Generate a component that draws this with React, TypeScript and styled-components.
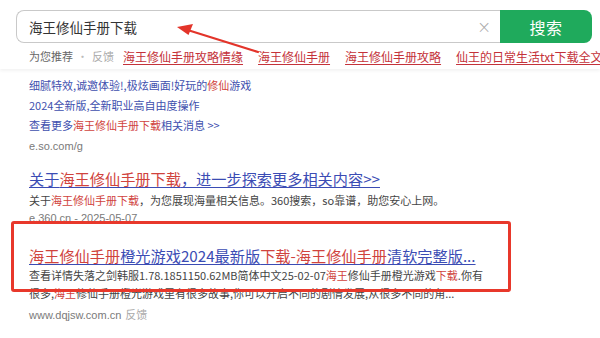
import React from 'react';
import styled, { createGlobalStyle } from 'styled-components';

const GlobalStyle = createGlobalStyle`
  html, body {
    margin: 0;
    padding: 0;
    background: #fff;
    font-family: "Noto Sans CJK SC", "Noto Sans", sans-serif;
    overflow: hidden;
  }
`;

const Page = styled.div`
  position: relative;
  width: 600px;
  height: 338px;
  overflow: hidden;
  background: #fff;
`;

const Header = styled.header`
  height: 69px;
  padding: 10px 0 0 16px;
  box-sizing: border-box;
  box-shadow: 0 2px 3px rgba(0, 0, 0, 0.05);
`;

const SearchRow = styled.div`
  display: flex;
  height: 33px;
  width: 576px;
`;

const InputBox = styled.div`
  flex: 1;
  display: flex;
  align-items: center;
  border: 1px solid #c9c9c9;
  border-right: none;
  border-radius: 8px 0 0 8px;
  padding: 0 0 0 12px;
  font-size: 13.5px;
  color: #333;
`;

const QueryText = styled.span`
  flex: 1;
`;

const Clear = styled.span`
  width: 28px;
  margin-right: 2px;
  text-align: center;
  color: #aaa;
  font-size: 17px;
  font-family: "DejaVu Sans", sans-serif;
  font-weight: 300;
`;

const SearchButton = styled.button`
  width: 92px;
  border: none;
  border-radius: 0 8px 8px 0;
  background: #1faa5c;
  color: #fff;
  font-family: inherit;
  font-size: 16px;
  letter-spacing: 0.5px;
`;

const SuggestRow = styled.div`
  display: flex;
  align-items: center;
  height: 26px;
  margin-left: 13px;
  white-space: nowrap;
  font-size: 11px;
`;

const Muted = styled.span`
  color: #666;
`;

const Dot = styled.span`
  color: #bbb;
  margin: 0 4px;
`;

const Feedback = styled.span`
  color: #aaa;
  margin-right: 9px;
`;

const Suggest = styled.a`
  color: #c4323a;
  font-size: 12px;
  text-decoration: underline;
  text-underline-offset: 2px;
  margin-right: 15px;
`;

const Results = styled.main`
  padding: 6px 0 0 29px;
`;

const Block = styled.section<{ $top: number }>`
  margin-top: ${(p) => p.$top}px;
`;

const Line = styled.div<{ $h?: number }>`
  font-size: 11px;
  line-height: ${(p) => p.$h ?? 20}px;
  white-space: nowrap;
  color: #444;
`;

const BlueLine = styled(Line)`
  color: #3e4fae;
`;

const Title = styled.a`
  display: block;
  font-size: 15.2px;
  line-height: 24px;
  white-space: nowrap;
  color: #3b4cb4;
  text-decoration: underline;
  text-decoration-thickness: 1px;
  text-underline-offset: 2px;
`;

const Hl = styled.span`
  color: #d0433d;
`;

const Url = styled.div<{ $h?: number; $mt?: number }>`
  font-size: 11px;
  line-height: ${(p) => p.$h ?? 20}px;
  margin-top: ${(p) => p.$mt ?? 0}px;
  color: #7a7a7a;
  font-family: "Liberation Sans", "Noto Sans CJK SC", sans-serif;
`;

const UrlFeedback = styled.span`
  color: #aaa;
  margin-left: 4px;
  font-family: "Noto Sans CJK SC", sans-serif;
`;

const Highlight = styled.div`
  position: absolute;
  left: 11px;
  top: 221px;
  width: 500px;
  height: 71px;
  box-sizing: border-box;
  border: 3px solid #e8382b;
  border-radius: 3px;
  pointer-events: none;
`;

const Arrow = styled.svg`
  position: absolute;
  left: 0;
  top: 0;
  pointer-events: none;
`;

const suggestions = ['海王修仙手册攻略情缘', '海王修仙手册', '海王修仙手册攻略', '仙王的日常生活txt下载全文下载'];

export default function App() {
  return (
    <Page>
      <GlobalStyle />
      <Header>
        <SearchRow>
          <InputBox>
            <QueryText>海王修仙手册下载</QueryText>
            <Clear>×</Clear>
          </InputBox>
          <SearchButton>搜索</SearchButton>
        </SearchRow>
        <SuggestRow>
          <Muted>为您推荐</Muted>
          <Dot>·</Dot>
          <Feedback>反馈</Feedback>
          {suggestions.map((s) => (
            <Suggest key={s}>{s}</Suggest>
          ))}
        </SuggestRow>
      </Header>

      <Results>
        <Block $top={0}>
          <BlueLine>
            细腻特效,诚邀体验!,极炫画面!好玩的<Hl>修仙</Hl>游戏
          </BlueLine>
          <BlueLine>2024全新版,全新职业高自由度操作</BlueLine>
          <BlueLine>
            查看更多<Hl>海王修仙手册下载</Hl>相关消息 &gt;&gt;
          </BlueLine>
          <Url $h={22}>e.so.com/g</Url>
        </Block>

        <Block $top={9}>
          <Title>
            关于<Hl>海王修仙手册下载</Hl>，进一步探索更多相关内容&gt;&gt;
          </Title>
          <Line>
            关于<Hl>海王修仙手册下载</Hl>，为您展现海量相关信息。360搜索，so靠谱，助您安心上网。
          </Line>
          <Url $h={16}>e.360.cn - 2025-05-07</Url>
        </Block>

        <Block $top={17}>
          <Title>
            <Hl>海王修仙手册</Hl>橙光游戏2024最新版<Hl>下载-海王修仙手册</Hl>清软完整版...
          </Title>
          <Line $h={17.5}>
            查看详情失落之剑韩服1.78.1851150.62MB简体中文25-02-07<Hl>海王</Hl>修仙手册橙光游戏<Hl>下载</Hl>.你有
          </Line>
          <Line $h={17.5}>
            很多,<Hl>海王</Hl>修仙手册橙光游戏里有很多故事,你可以开启不同的剧情发展,从很多不同的角...
          </Line>
          <Url $mt={2}>
            www.dqjsw.com.cn<UrlFeedback>反馈</UrlFeedback>
          </Url>
        </Block>
      </Results>

      <Highlight />
      <Arrow width="600" height="338" viewBox="0 0 600 338">
        <line x1="258" y1="52" x2="186" y2="29.5" stroke="#e3342a" strokeWidth="2.2" strokeLinecap="round" />
        <polygon points="177,27 193,24 188.5,35" fill="#e3342a" />
      </Arrow>
    </Page>
  );
}
